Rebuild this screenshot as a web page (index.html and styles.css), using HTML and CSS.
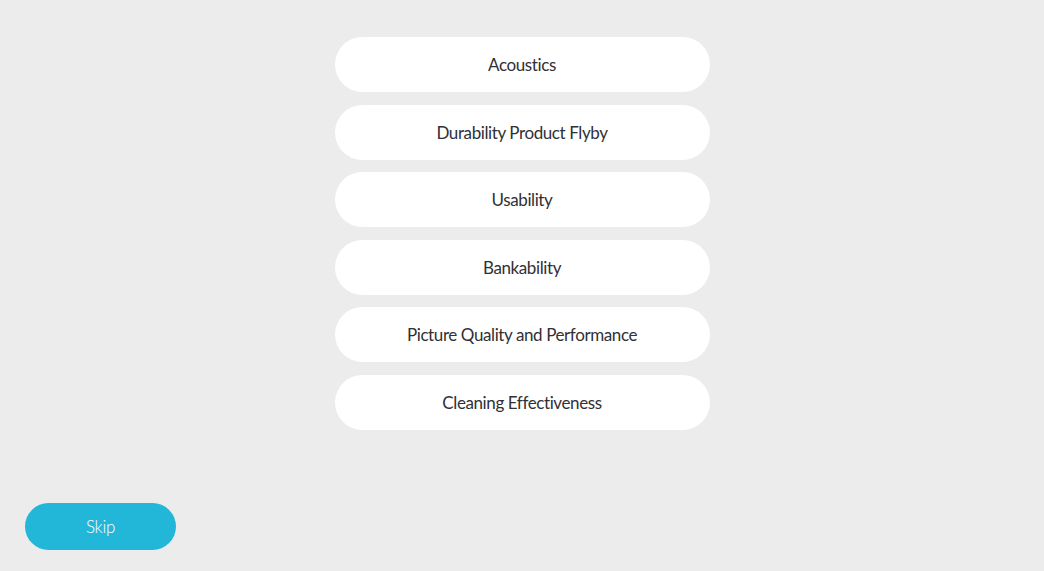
FILE: index.html
```html
<!DOCTYPE html>
<html lang="en">
<head>
<meta charset="utf-8">
<title>Topics</title>
<link rel="stylesheet" href="styles.css">
</head>
<body>
<div class="page">
  <main class="list">
    <button class="topic">Acoustics</button>
    <button class="topic">Durability Product Flyby</button>
    <button class="topic">Usability</button>
    <button class="topic">Bankability</button>
    <button class="topic">Picture Quality and Performance</button>
    <button class="topic">Cleaning Effectiveness</button>
  </main>
  <footer class="footer">
    <button class="skip">Skip</button>
  </footer>
</div>
</body>
</html>
```

FILE: styles.css
```css
html, body {
  margin: 0;
  padding: 0;
  background: #ececec;
}
.page {
  height: 571px;
  display: flex;
  flex-direction: column;
  font-family: "Lato", "DejaVu Sans", sans-serif;
}
.list {
  flex: 1;
  display: flex;
  flex-direction: column;
  align-items: center;
  gap: 12.5px;
  padding-top: 37px;
}
.topic {
  width: 375px;
  height: 55px;
  border: none;
  border-radius: 28px;
  background: #ffffff;
  color: #303036;
  font-family: inherit;
  font-size: 17px;
  letter-spacing: -0.4px;
  padding: 0;
}
.footer {
  padding: 0 0 21.5px 25px;
}
.skip {
  width: 151px;
  height: 46.5px;
  border: none;
  border-radius: 24px;
  background: #22b6d8;
  color: #ffffff;
  font-family: inherit;
  font-weight: 300;
  font-size: 17px;
  letter-spacing: -0.3px;
  padding: 0;
}
```
